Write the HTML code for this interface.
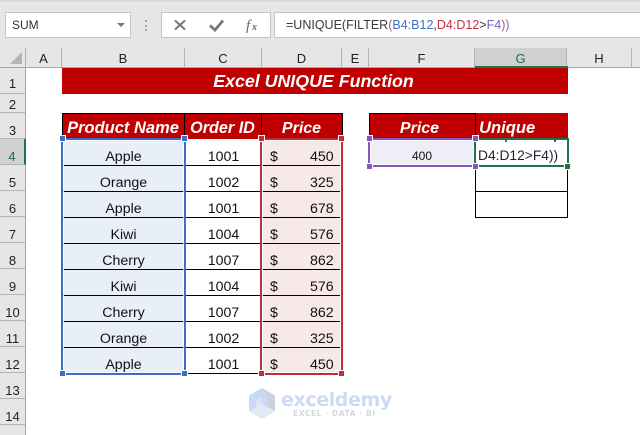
<!DOCTYPE html>
<html><head><meta charset="utf-8"><style>
html,body{margin:0;padding:0}
body{width:640px;height:435px;overflow:hidden;position:relative;background:#fff;font-family:"Liberation Sans",sans-serif;color:#111}
div{position:absolute;box-sizing:border-box}
.bx{background:#fff;border:1px solid #c6c6c6;top:12px;height:26px}
.ch{top:48px;height:19px;background:#e6e6e6;border-right:1px solid #b4b4b4;text-align:center;font-size:13px;line-height:21px;color:#222}
.rh{left:0;width:26px;background:#e6e6e6;border-bottom:1px solid #b4b4b4;border-right:1px solid #a8a8a8;text-align:center;font-size:13px;color:#222;height:26px;padding-top:10px}
.hd{background:#c00000;color:#fff;font-weight:bold;font-style:italic;text-align:center;font-size:16px;line-height:31px;height:26px;top:113px;white-space:nowrap}
.c{text-align:center;font-size:14.2px;height:26px;line-height:37px;white-space:nowrap}
.l{height:1px;background:#000}
.h{width:7px;height:7px;border:1px solid #fff}
.bl{background:#3a6fc4}.rd{background:#b8323c}.pu{background:#8457b8}
.sel{border-width:2px;border-style:solid;background:transparent;box-shadow:inset 0 0 0 1px rgba(255,255,255,.8)}
</style></head><body>
<div style="left:0;top:0;width:640px;height:68px;background:#e6e6e6"></div>
<div style="left:0;top:0;width:640px;height:2px;background:#d8d8d8"></div>
<div class="bx" style="left:5px;width:126px;font-size:12px;line-height:25px;padding-left:6px;color:#333">SUM</div>
<div style="left:117px;top:23px;width:0;height:0;border-left:4px solid transparent;border-right:4px solid transparent;border-top:4px solid #777"></div>
<div style="left:145px;top:20px;width:2px;height:2px;background:#aaa"></div>
<div style="left:145px;top:25px;width:2px;height:2px;background:#aaa"></div>
<div style="left:145px;top:29px;width:2px;height:2px;background:#aaa"></div>
<div class="bx" style="left:161px;width:110px"></div>
<svg style="position:absolute;left:161px;top:12px" width="110" height="26"><path d="M14 8.500L24 17.500M24 8.500L14 17.500" stroke="#777" stroke-width="2" fill="none"/><path d="M49 13.500L54 18L62 8.500" stroke="#777" stroke-width="2.800" fill="none"/><text x="85" y="18" font-family="Liberation Serif" font-style="italic" font-size="15" fill="#666">f</text><text x="91" y="18" font-family="Liberation Serif" font-style="italic" font-weight="bold" font-size="10" fill="#666">x</text></svg>
<div class="bx" style="left:274px;width:366px;font-size:12.5px;line-height:25px;padding-left:11px;color:#3a3a3a;white-space:nowrap;border-right:0">=UNIQUE(FILTER<span style="color:#c0506a">(</span><span style="color:#3d6fc0">B4:B12</span>,<span style="color:#c03040">D4:D12</span>&gt;<span style="color:#8060c0">F4</span><span style="color:#c0506a">)</span><span style="color:#6a6ac0">)</span></div>

<div class="ch" style="left:0;width:26px"></div>
<svg style="position:absolute;left:9px;top:51px" width="15" height="14"><path d="M13 1V13H1Z" fill="#b4b4b4"/></svg>
<div class="ch" style="left:26px;width:36px">A</div>
<div class="ch" style="left:62px;width:123px">B</div>
<div class="ch" style="left:185px;width:77px">C</div>
<div class="ch" style="left:262px;width:80px">D</div>
<div class="ch" style="left:342px;width:27px">E</div>
<div class="ch" style="left:369px;width:106px">F</div>
<div class="ch" style="left:475px;width:92px;background:#d0d0d0;color:#1d6b41">G</div>
<div class="ch" style="left:567px;width:65px">H</div>
<div class="ch" style="left:632px;width:8px;border-right:0"></div>
<div style="left:0;top:67px;width:640px;height:1px;background:#a8a8a8"></div>
<div style="left:475px;top:66px;width:93px;height:2px;background:#217346"></div>

<div class="rh" style="top:68px;padding-top:8px">1</div>
<div class="rh" style="top:94px;height:19px;padding-top:3px">2</div>
<div class="rh" style="top:113px">3</div>
<div class="rh" style="top:139px;background:#d0d0d0;color:#1d6b41;border-right:2px solid #217346">4</div>
<div class="rh" style="top:165px">5</div>
<div class="rh" style="top:191px">6</div>
<div class="rh" style="top:217px">7</div>
<div class="rh" style="top:243px">8</div>
<div class="rh" style="top:269px">9</div>
<div class="rh" style="top:295px">10</div>
<div class="rh" style="top:321px">11</div>
<div class="rh" style="top:347px">12</div>
<div class="rh" style="top:373px">13</div>
<div class="rh" style="top:399px">14</div>
<div class="rh" style="top:425px;height:10px;border-bottom:0"></div>

<div style="left:62px;top:68px;width:506px;height:26px;background:#c00000;color:#fff;font-weight:bold;font-style:italic;font-size:17.8px;line-height:27px;text-align:center;padding-right:3px">Excel UNIQUE Function</div>

<div style="left:63px;top:139px;width:121px;height:235px;background:#e8eff9"></div>
<div style="left:262px;top:139px;width:79px;height:235px;background:#f8e9e9"></div>
<div style="left:369px;top:139px;width:106px;height:27px;background:#efedf8"></div>

<div class="hd" style="left:62px;width:123px;font-size:16.5px;padding-right:1px">Product Name</div>
<div class="hd" style="left:185px;width:77px;font-size:16.2px;padding-right:2px">Order ID</div>
<div class="hd" style="left:262px;width:81px;padding-right:2px">Price</div>
<div class="hd" style="left:369px;width:106px;padding-right:5px">Price</div>
<div class="hd" style="left:475px;width:93px;text-align:left;padding-left:4px;font-size:16.6px;line-height:30px">Unique</div>
<div style="left:62px;top:113px;width:281px;height:1px;background:#000"></div>
<div style="left:369px;top:113px;width:107px;height:1px;background:#000"></div>
<div style="left:62px;top:113px;width:1px;height:26px;background:#000"></div>
<div style="left:184px;top:113px;width:1px;height:26px;background:#000"></div>
<div style="left:261px;top:113px;width:1px;height:26px;background:#000"></div>
<div style="left:342px;top:113px;width:1px;height:26px;background:#000"></div>
<div style="left:369px;top:113px;width:1px;height:26px;background:#000"></div>
<div style="left:475px;top:113px;width:1px;height:26px;background:#000"></div>

<div class="c" style="left:62px;top:139px;width:123px">Apple</div>
<div class="c" style="left:62px;top:165px;width:123px">Orange</div>
<div class="c" style="left:62px;top:191px;width:123px">Apple</div>
<div class="c" style="left:62px;top:217px;width:123px">Kiwi</div>
<div class="c" style="left:62px;top:243px;width:123px">Cherry</div>
<div class="c" style="left:62px;top:269px;width:123px">Kiwi</div>
<div class="c" style="left:62px;top:295px;width:123px">Cherry</div>
<div class="c" style="left:62px;top:321px;width:123px">Orange</div>
<div class="c" style="left:62px;top:347px;width:123px">Apple</div>

<div class="c" style="left:185px;top:139px;width:77px">1001</div>
<div class="c" style="left:185px;top:165px;width:77px">1002</div>
<div class="c" style="left:185px;top:191px;width:77px">1001</div>
<div class="c" style="left:185px;top:217px;width:77px">1004</div>
<div class="c" style="left:185px;top:243px;width:77px">1007</div>
<div class="c" style="left:185px;top:269px;width:77px">1004</div>
<div class="c" style="left:185px;top:295px;width:77px">1007</div>
<div class="c" style="left:185px;top:321px;width:77px">1002</div>
<div class="c" style="left:185px;top:347px;width:77px">1001</div>

<div class="c" style="left:270px;top:139px">$</div><div class="c" style="left:310px;top:139px">450</div>
<div class="c" style="left:270px;top:165px">$</div><div class="c" style="left:310px;top:165px">325</div>
<div class="c" style="left:270px;top:191px">$</div><div class="c" style="left:310px;top:191px">678</div>
<div class="c" style="left:270px;top:217px">$</div><div class="c" style="left:310px;top:217px">576</div>
<div class="c" style="left:270px;top:243px">$</div><div class="c" style="left:310px;top:243px">862</div>
<div class="c" style="left:270px;top:269px">$</div><div class="c" style="left:310px;top:269px">576</div>
<div class="c" style="left:270px;top:295px">$</div><div class="c" style="left:310px;top:295px">862</div>
<div class="c" style="left:270px;top:321px">$</div><div class="c" style="left:310px;top:321px">325</div>
<div class="c" style="left:270px;top:347px">$</div><div class="c" style="left:310px;top:347px">450</div>

<div class="l" style="left:63px;top:165px;width:277px"></div>
<div class="l" style="left:63px;top:191px;width:277px"></div>
<div class="l" style="left:63px;top:217px;width:277px"></div>
<div class="l" style="left:63px;top:243px;width:277px"></div>
<div class="l" style="left:63px;top:269px;width:277px"></div>
<div class="l" style="left:63px;top:295px;width:277px"></div>
<div class="l" style="left:63px;top:321px;width:277px"></div>
<div class="l" style="left:63px;top:347px;width:277px"></div>
<div class="l" style="left:186px;top:373px;width:74px"></div>

<div class="sel" style="left:61px;top:138px;width:125px;height:237px;border-color:#3a6fc4"></div>
<div class="sel" style="left:260px;top:138px;width:83px;height:237px;border-color:#b8323c"></div>
<div class="sel" style="left:368px;top:138px;width:108px;height:29px;border-color:#8457b8"></div>

<div class="c" style="left:369px;top:139px;width:106px;font-size:12px;line-height:35px">400</div>
<div style="left:475px;top:166px;width:93px;height:52px;border:1px solid #000;border-top:0"></div>
<div class="l" style="left:476px;top:191px;width:91px"></div>
<div style="left:474px;top:138px;width:95px;height:29px;border:2px solid #217346;background:#fff;overflow:hidden"></div>
<div style="left:505px;top:140px;width:2px;height:2px;background:#3a6fc4"></div>
<div style="left:554px;top:140px;width:2px;height:2px;background:#555"></div>
<div style="left:478px;top:143px;font-size:13.8px;line-height:26px;white-space:nowrap;color:#1b2433">D4:D12&gt;F4))</div>

<div class="h bl" style="left:59px;top:135px"></div>
<div class="h bl" style="left:181px;top:135px"></div>
<div class="h bl" style="left:59px;top:370px"></div>
<div class="h bl" style="left:181px;top:370px"></div>
<div class="h rd" style="left:258px;top:135px"></div>
<div class="h rd" style="left:338px;top:135px"></div>
<div class="h rd" style="left:258px;top:370px"></div>
<div class="h rd" style="left:338px;top:370px"></div>
<div class="h pu" style="left:366px;top:135px"></div>
<div class="h pu" style="left:472px;top:135px"></div>
<div class="h pu" style="left:366px;top:163px"></div>
<div class="h pu" style="left:472px;top:163px"></div>
<div class="h" style="left:564px;top:163px;background:#217346"></div>

<svg style="position:absolute;left:248px;top:387px" width="30" height="34"><path d="M14 1L27 8.500V24L14 32L1 24V8.500Z" fill="#c9d8f6"/><path d="M14 1L27 8.500V24L20 20V12Z" fill="#ccd2dc"/><path d="M1 24L14 32L27 24L14 17Z" fill="#e3e9f3"/><path d="M8 13L14 10V17L8 20Z" fill="#dfe3ea"/></svg>
<div style="left:281px;top:383px;font-family:'DejaVu Sans',sans-serif;font-weight:bold;font-size:19px;line-height:34px;color:#cdd9f7;white-space:nowrap;letter-spacing:-.4px">exceldemy</div>
<div style="left:293px;top:409px;font-family:'DejaVu Sans',sans-serif;font-weight:bold;font-size:7.500px;line-height:10px;color:#d4d8de;white-space:nowrap;letter-spacing:.6px">EXCEL · DATA · BI</div>
</body></html>
